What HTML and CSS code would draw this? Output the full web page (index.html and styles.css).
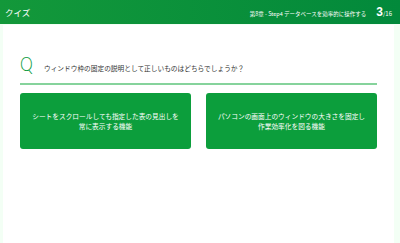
FILE: index.html
```html
<!DOCTYPE html>
<html>
<head>
    <title>クイズ</title>
    <link rel="stylesheet" href="styles.css">
</head>
<body>
    <div class="quiz-header">
        <div class="quiz-title">クイズ</div>
        <div class="quiz-meta">
            <span class="chapter">第8章 - Step4 データベースを効率的に操作する</span>
            <span class="progress"><b>3</b>/16</span>
        </div>
    </div>
    <div class="quiz-panel">
        <div class="question">
            <span class="q-mark">Q</span>
            <span class="q-text">ウィンドウ枠の固定の説明として正しいものはどちらでしょうか？</span>
        </div>
        <div class="choices">
            <div class="choice">シートをスクロールしても指定した表の見出しを<br>常に表示する機能</div>
            <div class="choice">パソコンの画面上のウィンドウの大きさを固定し<br>作業効率化を図る機能</div>
        </div>
    </div>
</body>
</html>
```

FILE: styles.css
```css
html, body {
    margin: 0;
    height: 100%;
}
body {
    background-color: #f3fff5;
    font-family: "Noto Sans CJK JP", "Noto Sans", sans-serif;
    color: #333;
}
.quiz-header {
    height: 24px;
    display: flex;
    align-items: center;
    justify-content: space-between;
    padding: 0 8px 0 5px;
    background: linear-gradient(to right, #13983a, #02893b);
    color: #fff;
}
.quiz-title {
    font-size: 8.5px;
}
.quiz-meta {
    display: flex;
    align-items: baseline;
    gap: 10px;
}
.chapter {
    font-size: 5.5px;
}
.progress {
    font-size: 6px;
}
.progress b {
    font-size: 12px;
    font-family: "Liberation Sans", sans-serif;
}
.quiz-panel {
    background-color: #fff;
    margin: 1px 6px 0 3px;
    padding: 30px 17px 0;
    height: calc(100% - 55px);
}
.question {
    display: flex;
    align-items: baseline;
    gap: 11px;
    padding-bottom: 10px;
    border-bottom: 2px solid #86d39c;
}
.q-mark {
    font-family: "Lato", sans-serif;
    font-weight: 300;
    font-size: 19px;
    line-height: 18px;
    color: #0a9a3c;
    display: inline-block;
    transform: scaleX(0.85);
    transform-origin: left;
    width: 13px;
}
.q-text {
    font-size: 6.7px;
}
.choices {
    display: grid;
    grid-template-columns: 1fr 1fr;
    gap: 15px;
    margin-top: 8px;
}
.choice {
    height: 56px;
    display: flex;
    align-items: center;
    justify-content: center;
    text-align: center;
    background-color: #0c9e3c;
    border-radius: 3px;
    color: #fff;
    font-size: 6.7px;
    line-height: 10px;
}
```
